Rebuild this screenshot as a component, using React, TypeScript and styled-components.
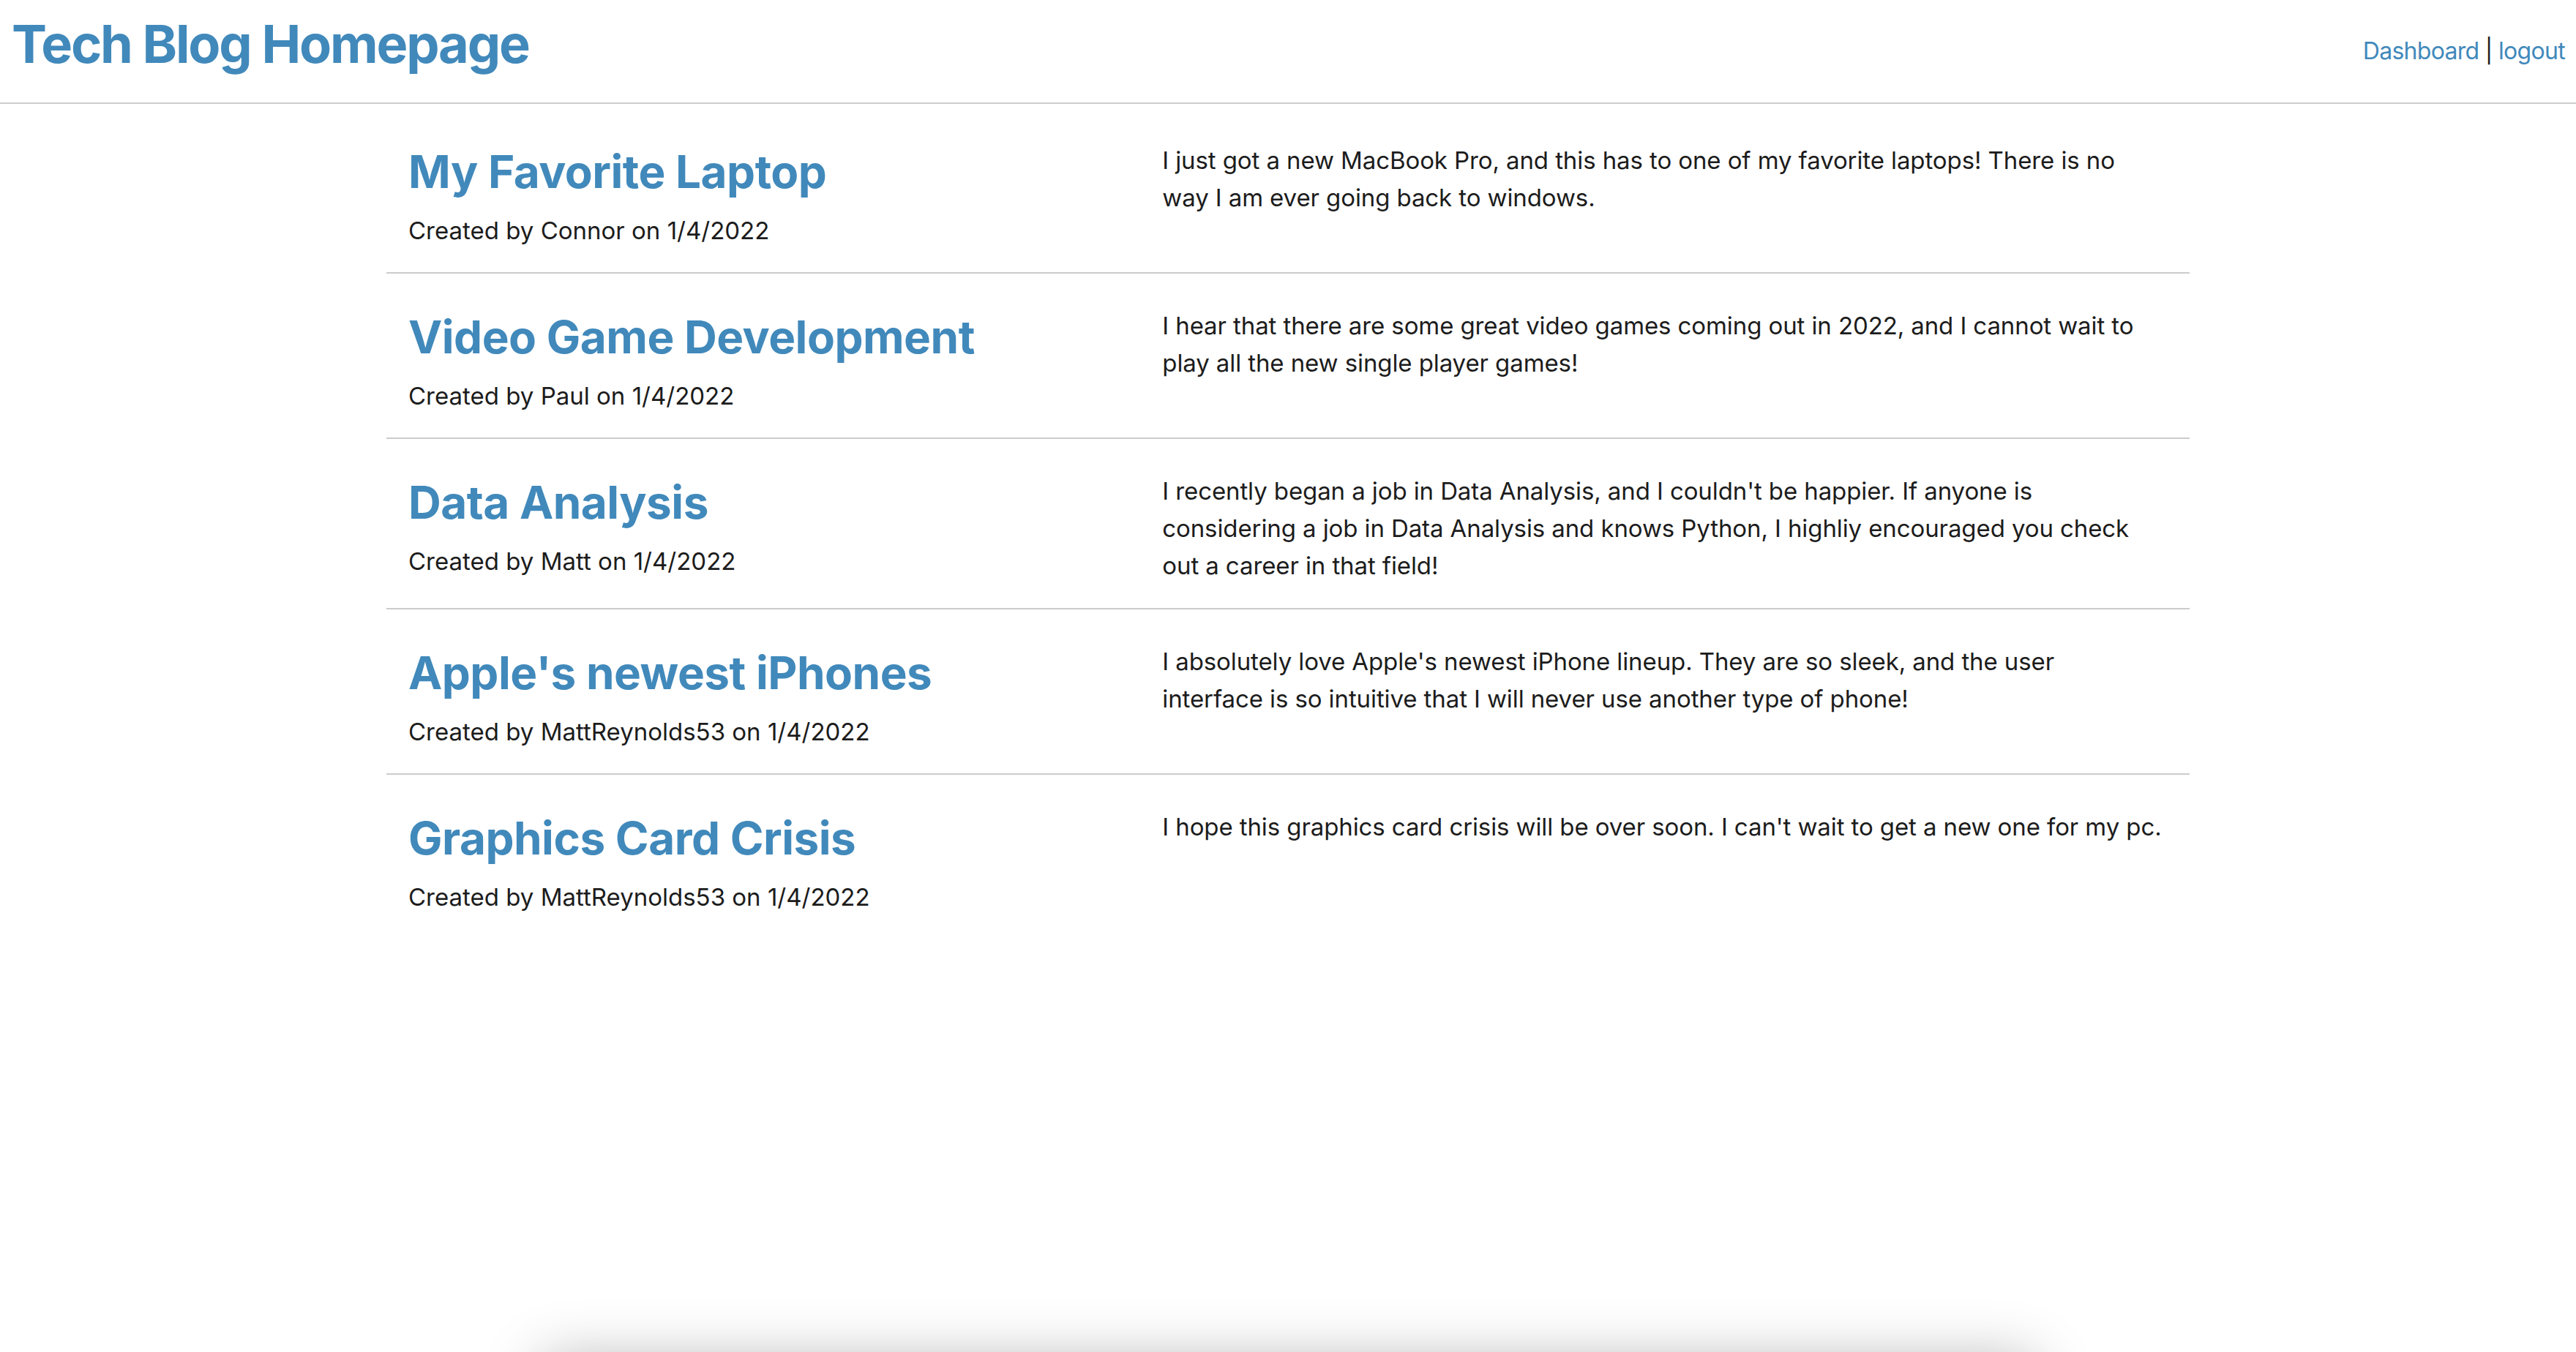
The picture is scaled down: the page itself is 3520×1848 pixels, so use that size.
import React from "react";
import styled, { createGlobalStyle } from "styled-components";

const GlobalStyle = createGlobalStyle`
  html, body {
    margin: 0;
    padding: 0;
    background: #ffffff;
  }
  body {
    font-family: Inter, "Noto Sans", "Liberation Sans", sans-serif;
    color: #1c1c1c;
  }
  *, *::before, *::after { box-sizing: border-box; }
`;

const BLUE = "#4189bb";
const RULE = "#cccccc";

const Page = styled.div`
  min-height: calc(100vh + 12px);
`;

const Header = styled.header`
  display: flex;
  justify-content: space-between;
  align-items: flex-start;
  height: 142px;
  padding: 17px 15px 0 16px;
  border-bottom: 2px solid ${RULE};
`;

const SiteTitle = styled.h1`
  margin: 0;
  font-size: 72px;
  line-height: 86px;
  font-weight: 700;
  color: ${BLUE};
  letter-spacing: -2.2px;
`;

const Nav = styled.nav`
  margin-top: 28px;
  font-size: 32px;
  line-height: 50px;
  letter-spacing: -0.7px;
  color: #1c1c1c;
`;

const NavLink = styled.a`
  color: ${BLUE};
  text-decoration: none;
`;

const Main = styled.main`
  width: 70%;
  margin: 0 auto;
  padding-top: 6px;
`;

const Post = styled.article<{ $last?: boolean }>`
  display: grid;
  grid-template-columns: 3fr 4fr;
  padding: 0 30px;
  border-bottom: ${(p) => (p.$last ? "none" : `2px solid ${RULE}`)};
`;

const PostHead = styled.div`
  padding: 50px 0 31px;
`;

const PostTitle = styled.h2`
  margin: 0;
  font-size: 62px;
  line-height: 74px;
  font-weight: 700;
  color: ${BLUE};
  letter-spacing: -0.5px;
`;

const Meta = styled.p`
  margin: 18px 0 0;
  font-size: 33px;
  line-height: 51px;
`;

const Body = styled.p`
  margin: 0 -12px 0 0;
  padding: 46px 0 32px;
  font-size: 33px;
  line-height: 51px;
  letter-spacing: -0.1px;
`;

const Footer = styled.footer`
  width: 2040px;
  height: 200px;
  margin: 0 auto;
  background: #ffffff;
  box-shadow: 0 0 80px rgba(0, 0, 0, 0.3);
`;

type PostData = { title: string; author: string; date: string; body: string[] };

const posts: PostData[] = [
  {
    title: "My Favorite Laptop",
    author: "Connor",
    date: "1/4/2022",
    body: [
      "I just got a new MacBook Pro, and this has to one of my favorite laptops! There is no",
      "way I am ever going back to windows.",
    ],
  },
  {
    title: "Video Game Development",
    author: "Paul",
    date: "1/4/2022",
    body: [
      "I hear that there are some great video games coming out in 2022, and I cannot wait to",
      "play all the new single player games!",
    ],
  },
  {
    title: "Data Analysis",
    author: "Matt",
    date: "1/4/2022",
    body: [
      "I recently began a job in Data Analysis, and I couldn't be happier. If anyone is",
      "considering a job in Data Analysis and knows Python, I highliy encouraged you check",
      "out a career in that field!",
    ],
  },
  {
    title: "Apple's newest iPhones",
    author: "MattReynolds53",
    date: "1/4/2022",
    body: [
      "I absolutely love Apple's newest iPhone lineup. They are so sleek, and the user",
      "interface is so intuitive that I will never use another type of phone!",
    ],
  },
  {
    title: "Graphics Card Crisis",
    author: "MattReynolds53",
    date: "1/4/2022",
    body: [
      "I hope this graphics card crisis will be over soon. I can't wait to get a new one for my pc.",
    ],
  },
];

export default function App() {
  return (
    <>
      <GlobalStyle />
      <Page>
        <Header>
          <SiteTitle>Tech Blog Homepage</SiteTitle>
          <Nav>
            <NavLink href="#">Dashboard</NavLink> | <NavLink href="#">logout</NavLink>
          </Nav>
        </Header>
        <Main>
          {posts.map((p, i) => (
            <Post key={p.title} $last={i === posts.length - 1}>
              <PostHead>
                <PostTitle>{p.title}</PostTitle>
                <Meta>
                  Created by {p.author} on {p.date}
                </Meta>
              </PostHead>
              <Body>
                {p.body.map((line, j) => (
                  <React.Fragment key={j}>
                    {j > 0 && <br />}
                    {line}
                  </React.Fragment>
                ))}
              </Body>
            </Post>
          ))}
        </Main>
      </Page>
      <Footer />
    </>
  );
}
